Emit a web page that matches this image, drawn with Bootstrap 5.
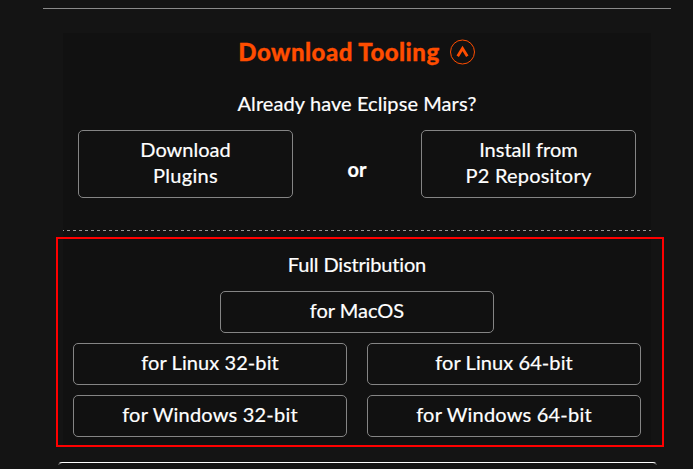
<!DOCTYPE html>
<html lang="en">
<head>
<meta charset="utf-8">
<meta name="viewport" content="width=device-width, initial-scale=1">
<title>Download Tooling</title>
<link href="https://cdn.jsdelivr.net/npm/bootstrap@5.3.0/dist/css/bootstrap.min.css" rel="stylesheet">
<style>
body{background:#141414;color:#fff;font-family:Lato,"Noto Sans",sans-serif;font-size:20px;line-height:26px;height:469px;font-variant-ligatures:none;-webkit-text-stroke:.2px currentColor}
.rule-top{margin:8px 22px 0 43px;border-top:1px solid #8a8a8a}
.panel{width:588px;height:414px;margin:24px 0 0 63px;background:#111}
.tooling{height:198px;padding:0 15px;background:repeating-linear-gradient(90deg,#999 0 1px,transparent 1px 4px,#999 4px 6px) left bottom/100% 1px no-repeat}
.title{color:#ff4d00;font-size:24px;font-weight:900;line-height:30px;padding-top:4px;gap:10px;-webkit-text-stroke:.3px currentColor}
.ask{margin-top:23px}
.pick{margin-top:14px}
.btn-line{--bs-btn-color:#fff;--bs-btn-border-color:#858585;--bs-btn-border-radius:5px;--bs-btn-font-size:20px;--bs-btn-line-height:26px;--bs-btn-font-family:inherit;--bs-btn-padding-y:0;--bs-btn-padding-x:0;white-space:nowrap}
.btn-tall{width:215px;height:68px;padding-top:5px}
.btn-wide{width:274px;height:42px;padding-top:5px}
.or{padding-top:10px}
.distro{padding:20px 10px 0}
.grid-gap{gap:10px 20px}
.mac-row{margin:14px 0 10px}
.t-title{letter-spacing:.47px}
.t-ask{letter-spacing:.08px}
.t-pl{letter-spacing:.3px}
.t-p2{letter-spacing:.2px}
.t-full{letter-spacing:-.15px}
.t-lin{letter-spacing:.08px}
.t-win{letter-spacing:.2px}
.highlight{left:56px;top:237px;width:608px;height:210px;border:2px solid red;pointer-events:none}
.next-box{margin:15px 36px 0 58px;height:7px;border:1px solid #fff;border-bottom:0;border-color:#fff #555;border-radius:4px 4px 0 0;clip-path:inset(0 0 4px)}
</style>
</head>
<body class="overflow-hidden position-relative">
<div class="rule-top"></div>
<main class="panel text-center">
  <section class="tooling">
    <h1 class="title d-flex justify-content-center align-items-center m-0"><span class="t-title">Download Tooling</span>
      <svg width="26" height="26" viewBox="0 0 26 26" fill="none" stroke="#ff4d00"><circle cx="12.500" cy="13" r="12"/><path d="M7.700 17.200 12.500 9.500l4.800 7.700" stroke-width="2.800"/></svg>
    </h1>
    <p class="ask mb-0"><span class="t-ask">Already have Eclipse Mars?</span></p>
    <div class="pick d-flex justify-content-between align-items-center">
      <a class="btn btn-line btn-tall" href="#"><span>Download</span><br><span class="t-pl">Plugins</span></a>
      <span class="or fw-bold">or</span>
      <a class="btn btn-line btn-tall" href="#"><span>Install from</span><br><span class="t-p2">P2 Repository</span></a>
    </div>
  </section>
  <section class="distro">
    <p class="mb-0"><span class="t-full">Full Distribution</span></p>
    <div class="mac-row d-flex justify-content-center">
      <a class="btn btn-line btn-wide" href="#">for MacOS</a>
    </div>
    <div class="grid-gap d-flex flex-wrap justify-content-center">
      <a class="btn btn-line btn-wide" href="#"><span class="t-lin">for Linux 32-bit</span></a>
      <a class="btn btn-line btn-wide" href="#"><span class="t-lin">for Linux 64-bit</span></a>
      <a class="btn btn-line btn-wide" href="#"><span class="t-win">for Windows 32-bit</span></a>
      <a class="btn btn-line btn-wide" href="#"><span class="t-win">for Windows 64-bit</span></a>
    </div>
  </section>
</main>
<div class="next-box"></div>
<div class="highlight position-absolute"></div>
<script src="https://cdn.jsdelivr.net/npm/bootstrap@5.3.0/dist/js/bootstrap.bundle.min.js"></script>
</body>
</html>
